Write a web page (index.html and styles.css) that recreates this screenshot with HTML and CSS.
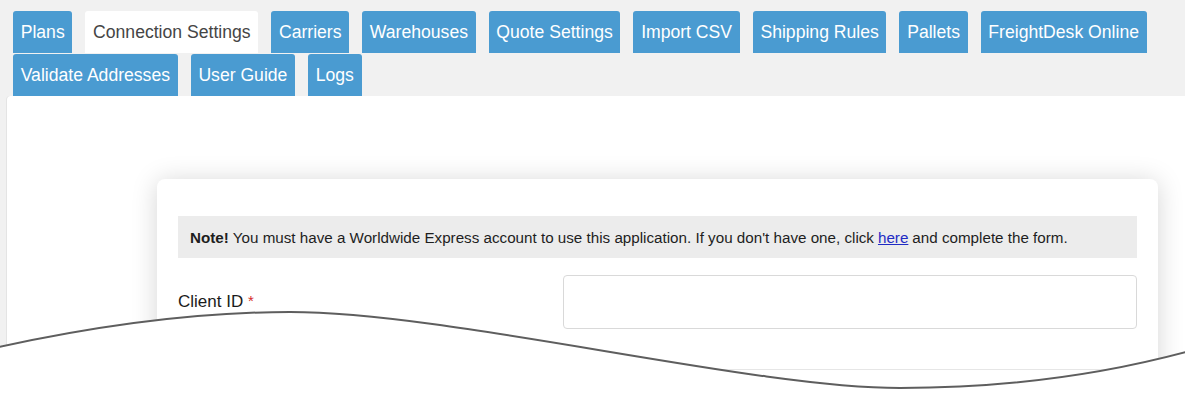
FILE: index.html
```html
<!DOCTYPE html>
<html>
<head>
<meta charset="utf-8">
<link rel="stylesheet" href="styles.css">
</head>
<body>
<div class="page">
  <nav class="tabs">
    <a class="tab">Plans</a>
    <a class="tab active">Connection Settings</a>
    <a class="tab">Carriers</a>
    <a class="tab">Warehouses</a>
    <a class="tab">Quote Settings</a>
    <a class="tab">Import CSV</a>
    <a class="tab">Shipping Rules</a>
    <a class="tab">Pallets</a>
    <a class="tab">FreightDesk Online</a>
    <a class="tab">Validate Addresses</a>
    <a class="tab">User Guide</a>
    <a class="tab">Logs</a>
  </nav>
  <main class="panel">
    <section class="card">
      <div class="note"><b>Note!</b> You must have a Worldwide Express account to use this application. If you don't have one, click <a class="link" href="#">here</a> and complete the form.</div>
      <div class="field">
        <label class="label">Client ID <span class="req">*</span></label>
        <input class="input" type="text">
      </div>
      <div class="divider"></div>
    </section>
  </main>
  <svg class="tear" width="1185" height="397" viewBox="0 0 1185 397">
    <path class="tear-fill" d="M0 347 C100 325 200 312 290 312 C450 312 750 388 900 388 C1000 388 1100 375 1186 352 L1186 398 L0 398 Z"/>
    <path class="tear-line" d="M-1 347 C100 325 200 312 290 312 C450 312 750 388 900 388 C1000 388 1100 375 1186 352"/>
  </svg>
</div>
</body>
</html>
```
FILE: styles.css
```css
html, body {
  margin: 0;
  padding: 0;
}
body {
  background: #f1f1f1;
  font-family: "Liberation Sans", Arial, Helvetica, sans-serif;
  color: #222;
  overflow: hidden;
}
.page {
  position: relative;
  width: 1185px;
  height: 397px;
  overflow: hidden;
}
.tabs {
  display: flex;
  flex-wrap: wrap;
  column-gap: 13px;
  row-gap: 1px;
  padding: 11px 0 0 13px;
  width: 1180px;
  box-sizing: border-box;
}
.tab {
  display: flex;
  align-items: center;
  height: 42px;
  padding: 0 7.7px;
  background: #4a9bd1;
  color: #fff;
  font-size: 17.6px;
  border-radius: 3px 3px 0 0;
  white-space: nowrap;
}
.tab.active {
  background: #fff;
  color: #454545;
}
.panel {
  margin-left: 7px;
  background: #fff;
  border-radius: 4px 0 0 0;
  padding: 83px 27px 40px 150px;
  box-shadow: -1px 0 0 #e4e4e4;
}
.card {
  background: #fff;
  border-radius: 8px;
  box-shadow: 0 2px 26px rgba(0, 0, 0, 0.17);
  padding: 37px 21px 0 21px;
}
.note {
  background: #ececec;
  height: 42px;
  display: flex;
  align-items: center;
  padding: 0 12px;
  font-size: 15.2px;
  color: #1e1e1e;
  white-space: nowrap;
}
.note b {
  margin-right: 4px;
}
.link {
  color: #1f2bc4;
  text-decoration: underline;
  margin: 0 4px;
}
.field {
  display: flex;
  align-items: center;
  margin-top: 17px;
}
.label {
  width: 385px;
  flex: none;
  font-size: 17px;
  color: #1b1b1b;
}
.req {
  color: #d62b2b;
  font-size: 15px;
  vertical-align: top;
}
.input {
  flex: 1;
  height: 54px;
  box-sizing: border-box;
  border: 1px solid #d9d9d9;
  border-radius: 4px;
  background: #fff;
  margin: 0;
}
.divider {
  margin: 40px -21px 0 -21px;
  border-top: 1px solid #e6e6e6;
  height: 60px;
}
.tear {
  position: absolute;
  left: 0;
  top: 0;
  pointer-events: none;
}
.tear-fill {
  fill: #fff;
}
.tear-line {
  fill: none;
  stroke: #5e5e5e;
  stroke-width: 2;
}
```
